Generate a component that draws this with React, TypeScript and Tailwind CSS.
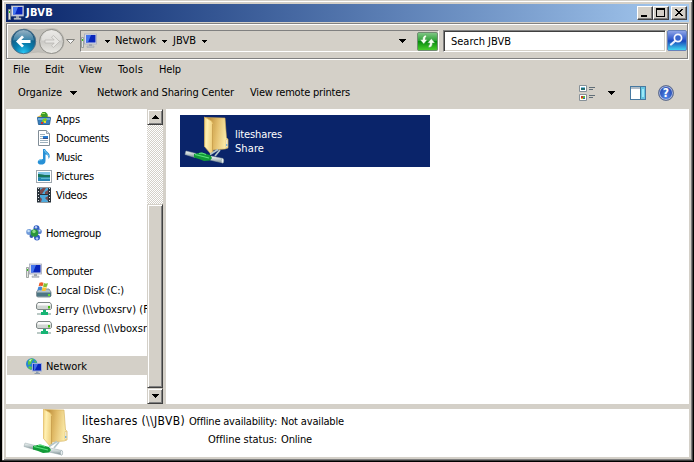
import React, { useLayoutEffect, useRef, useState } from "react";

/** A line of text whose tracking is adjusted to fill a given width. */
function Label({ text, width, className = "" }: { text: string; width: number; className?: string }) {
  const ref = useRef<HTMLSpanElement>(null);
  const [tracking, setTracking] = useState(0);
  useLayoutEffect(() => {
    if (ref.current) {
      const natural = ref.current.getBoundingClientRect().width;
      setTracking((width - natural) / text.length);
    }
  }, [text, width]);
  return (
    <span className="block shrink-0 whitespace-pre" style={{ width }}>
      <span ref={ref} className={`inline-block whitespace-pre ${className}`} style={{ letterSpacing: tracking }}>
        {text}
      </span>
    </span>
  );
}

function Caret({ className = "" }: { className?: string }) {
  return (
    <svg className={`shrink-0 ${className}`} width="7" height="4" viewBox="0 0 7 4" shapeRendering="crispEdges">
      <path d="M0 0h7v1H6v1H5v1H4v1H3V3H2V2H1V1H0z" fill="currentColor" />
    </svg>
  );
}

function SmallCaret({ className = "" }: { className?: string }) {
  return (
    <svg className={`shrink-0 ${className}`} width="5" height="3" viewBox="0 0 5 3" shapeRendering="crispEdges">
      <path d="M0 0h5v1H4v1H3v1H2V2H1V1H0z" fill="currentColor" />
    </svg>
  );
}

function ComputerIcon() {
  return (
    <svg className="shrink-0" width="16" height="16" viewBox="0 0 16 16">
      <path d="M.5 4.5h2v10h-2z" fill="#e4e6e4" stroke="#8c938f" strokeWidth=".8" />
      <path d="M1 6h1v2H1z" fill="#31c51d" />
      <rect x="3.5" y="1" width="12" height="10" fill="#d9dcea" stroke="#a5aabb" strokeWidth=".8" />
      <rect x="5" y="2" width="9.5" height="7.5" fill="#0825bb" />
      <path d="M5 2h5L7 9.5H5z" fill="#4475ee" />
      <path d="M8 11h3v2H8z" fill="#a3a8b0" />
      <path d="M6 13h7v1.4H6z" fill="#c7cbd2" stroke="#969ca6" strokeWidth=".5" />
    </svg>
  );
}

function NetDriveIcon() {
  return (
    <svg className="shrink-0" width="17" height="16" viewBox="0 0 17 16">
      <path d="M2 1.5h12l1.5 2v4l-1 1H2l-1.5-1v-4z" fill="#d0d5d2" stroke="#7e8786" />
      <path d="M2.3 2h11.5l1 2.500H1.3z" fill="#fafafa" />
      <path d="M12 5h2v2.5h-2z" fill="#42bd12" />
      <path d="M7 9h3v2h2v3H5v-3h2z" fill="#16b474" />
      <path d="M1 12h4v2H1zM12 12h3v2h-3z" fill="#bac9c5" />
    </svg>
  );
}

function AppsIcon() {
  return (
    <svg className="shrink-0" width="16" height="16" viewBox="0 0 16 16">
      <path d="M4 6 5 3l1.5-2h3l2 2 .5 3z" fill="#3d9b25" />
      <path d="M6 2h3v1H6z" fill="#a5df56" />
      <path d="M1 6 5 4l1 3zM11 5l4 1-2 1z" fill="#e0b644" />
      <path d="M1.5 6.5h13l-1 7h-11z" fill="#367fbd" stroke="#2c659b" />
      <path d="M2 7h12v2H2z" fill="#6aaad8" />
      <path d="m7 8 3-1 1 2-2 2H6z" fill="#7fcc27" />
      <path d="M5 11h2v2H5z" fill="#c9352c" />
      <path d="M8 10h2v2H8z" fill="#f2d235" />
    </svg>
  );
}

function DocumentsIcon() {
  return (
    <svg className="shrink-0" width="16" height="16" viewBox="0 0 16 16">
      <path d="M2.5.5h8l3 3v12h-11z" fill="#fff" stroke="#818d97" />
      <path d="M10.5.5v3h3" fill="#e0e7ed" stroke="#96a3ad" />
      <path d="M4 4.5h5M4 6.5h3M4 8.5h3M4 10.5h8M4 12.5h8" stroke="#9db1bd" />
      <rect x="7" y="6" width="5" height="3" fill="#257bd0" />
      <path d="M7 8.5h5" stroke="#39518c" />
    </svg>
  );
}

function MusicIcon() {
  return (
    <svg className="shrink-0" width="16" height="16" viewBox="0 0 16 16">
      <path d="M7 0h2c1 3 6 4 4.5 8.5l-1 1.5c.4-3-1-4.5-3-4.5V12c0 3-3 4-5.500 3.500s-3-3-1-4.500 3-1 4-.8z" fill="#2790d6" />
      <path d="M8.300 1c1 3 4 4 4.800 6M2.500 12c.5-1 2-1.600 3.500-1.300" fill="none" stroke="#83d2f5" />
    </svg>
  );
}

function PicturesIcon() {
  return (
    <svg className="shrink-0" width="16" height="16" viewBox="0 0 16 16">
      <rect x=".5" y="2.5" width="15" height="12" fill="#fff" stroke="#a0a8af" />
      <rect x="2" y="4" width="12" height="9" fill="#84c6e8" />
      <path d="M2 6c3-.5 5 1.500 12 1v2.500H2z" fill="#17765a" />
      <path d="M2 9.500h12V13H2z" fill="#2584b3" />
      <path d="M5 10.500h9" stroke="#55b9cd" />
    </svg>
  );
}

function VideosIcon() {
  return (
    <svg className="shrink-0" width="16" height="16" viewBox="0 0 16 16">
      <path d="M1 .5h14v15H1z" fill="#29323b" />
      <path d="M4 1h8v6H4zM4 8h8v7H4z" fill="#4da9dc" />
      <path d="m4 3 3-2h3L8 4 6 7H4zM9 5l3-2v4H9zM4 10l2 2-1 3H4zM12 9v5l-3-3z" fill="#7b4a4d" />
      <path d="M2.5 1v15M13.5 1v15" stroke="#e2e5e7" strokeDasharray="1 2" />
    </svg>
  );
}

function HomegroupIcon() {
  return (
    <svg className="shrink-0" width="16" height="16" viewBox="0 0 16 16">
      <circle cx="3.200" cy="7" r="3" fill="#6f9ad9" />
      <circle cx="10.500" cy="3.200" r="3" fill="#315ec1" />
      <circle cx="11" cy="12.500" r="3" fill="#315ec1" />
      <circle cx="13.200" cy="6.500" r="2.600" fill="#5c82ce" />
      <circle cx="5.500" cy="11" r="2" fill="#345aa8" />
      <circle cx="8.500" cy="8" r="3.800" fill="#29953a" />
      <circle cx="8" cy="6.500" r="1.700" fill="#8edc83" />
      <circle cx="2.600" cy="6" r="1.300" fill="#c3def6" />
      <circle cx="10" cy="2.300" r="1.200" fill="#b6cef7" />
      <circle cx="13.600" cy="5.700" r="1" fill="#c3def6" />
      <circle cx="11" cy="13.500" r="1.300" fill="#b6cef7" />
    </svg>
  );
}

function DiskIcon() {
  return (
    <svg className="shrink-0" width="17" height="16" viewBox="0 0 17 16">
      <path d="m2 8 2-1h9l2 3v4l-1 1H1.500l-1-1v-4z" fill="#b5c3cb" stroke="#718087" strokeWidth=".8" />
      <path d="M1 10.500h14v4H1z" fill="#4d7683" />
      <path d="M12 12h2v2h-2z" fill="#65dc2d" />
      <path d="M3.500.8q2-1.200 4 0L6.600 4.300q-2-1-4 0z" fill="#ed5c28" />
      <path d="M8 1q2 1 4 0l-1 3.500q-2 1-4 0z" fill="#84bf35" />
      <path d="M2.300 5q2-1 4 0l-1 3.500q-2-1-4 0z" fill="#4387d7" />
      <path d="M6.800 5q2 1 4 0l-1 3.500q-2 1-4 0z" fill="#f9c52e" />
    </svg>
  );
}

function NetworkIcon() {
  return (
    <svg className="shrink-0" width="17" height="16" viewBox="0 0 17 16">
      <circle cx="5.700" cy="6" r="5.700" fill="#2784d5" />
      <path d="M2 3Q5-.5 8 1L6 3 5 6 2 7zM9 2l2 3-3-1zM3 8l3 1-1 3-3-2z" fill="#5ac646" />
      <path d="m3 2 3-1-2 3z" fill="#d7f4c1" />
      <rect x="6.500" y="5.500" width="9" height="7.500" fill="#0825bb" stroke="#9aabd6" />
      <path d="M8 6h4l-3 6H8z" fill="#426de5" />
      <path d="M10 13.500h2.500v1.500H14v1H8.500v-1H10z" fill="#8b9bad" />
    </svg>
  );
}

function FolderShareIcon({ className = "" }: { className?: string }) {
  return (
    <svg className={`shrink-0 ${className}`} width="48" height="50" viewBox="0 0 48 50">
      <defs>
        <linearGradient id="folderFront" x1="0" x2="1" y2=".2">
          <stop stopColor="#f1d078" />
          <stop offset=".35" stopColor="#fff0b2" />
          <stop offset="1" stopColor="#efcf7c" />
        </linearGradient>
        <linearGradient id="folderBack" x1="0" x2="1" y2=".2">
          <stop offset=".2" stopColor="#c39642" />
          <stop offset=".55" stopColor="#e3be6c" />
          <stop offset="1" stopColor="#faeaa9" />
        </linearGradient>
        <linearGradient id="cable" x1="0" y1="0" x2="0" y2="1">
          <stop stopColor="#f8fbfa" />
          <stop offset=".5" stopColor="#bdcacb" />
          <stop offset="1" stopColor="#75868a" />
        </linearGradient>
      </defs>
      <path d="m22 2.500 19 .5 1.500 20 1.500 1v9l-3 1-13 1z" fill="url(#folderBack)" stroke="#d2ac58" strokeWidth=".6" />
      <path d="M42 24.500h1.700v8H42z" fill="#eff6fa" stroke="#e1bc66" strokeWidth=".6" />
      <path d="M42.300 29h1v2h-1z" fill="#4d9edb" />
      <path d="m20.500 2 7 4 1.500 3v28l-2.500 1.500-6-7z" fill="url(#folderFront)" stroke="#dfb95e" strokeWidth=".7" />
      <path d="M28.500 9v28" stroke="#b98c3d" strokeWidth=".6" />
      <path d="m26 39.500 8-5M31 41l5-6" stroke="#b4c6c9" strokeWidth="1.700" />
      <path d="m2 36 10 2.500-1 4L1 39.500z" fill="url(#cable)" stroke="#97a7ab" strokeWidth=".5" />
      <path d="m27 41 12 2.500V48l-13-3z" fill="url(#cable)" stroke="#97a7ab" strokeWidth=".5" />
      <ellipse cx="38.500" cy="45.800" rx="1.200" ry="2.300" fill="#e9eff1" stroke="#8b9ca1" strokeWidth=".5" />
      <path d="m10 39 7-1.500 3 1 6 1.500 2 3-2 2.500-6 .5-5-2-5-1.500z" fill="#129b38" />
      <path d="m11 39.500 14 3.500M15 38.500l3-.5 4 1.500" stroke="#5ce37d" strokeWidth="1.200" fill="none" />
    </svg>
  );
}

function CaptionButton({ children, label }: { children: React.ReactNode; label: string }) {
  return (
    <button aria-label={label} className="h-[14px] w-4 shrink-0 border border-t-white border-l-white border-r-[#404040] border-b-[#404040] bg-[#d4d0c8] shadow-[inset_-1px_-1px_0_#808080]">
      <svg width="14" height="12" viewBox="0 0 14 12" shapeRendering="crispEdges">{children}</svg>
    </button>
  );
}

function TitleBar() {
  return (
    <div className="flex h-[18px] shrink-0 items-center bg-linear-to-r from-[#0a246a] to-[#a6caf0] pr-0.5 pl-0.5 text-white">
      <ComputerIcon />
      <Label text="JBVB" width={27} className="ml-0.5 font-bold" />
      <div className="ml-auto flex">
        <CaptionButton label="Minimize"><path d="M3 8h6v2H3z" /></CaptionButton>
        <CaptionButton label="Maximize"><path fillRule="evenodd" d="M2 1h9v9H2zM3 3v6h7V3z" /></CaptionButton>
        <span className="w-0.5" />
        <CaptionButton label="Close"><path d="M3 2h2v1h1v1h2V3h1V2h2v1h-1v1H9v1H8v1h1v1h1v1h1v1H9V8H8V7H6v1H5v1H3V8h1V7h1V6h1V5H5V4H4V3H3z" /></CaptionButton>
      </div>
    </div>
  );
}

function NavButtons() {
  return (
    <svg className="shrink-0" width="67" height="30" viewBox="0 0 67 30">
      <defs>
        <radialGradient id="backFill" cx=".5" cy=".95" r=".8">
          <stop stopColor="#28c5f4" />
          <stop offset=".45" stopColor="#087eae" />
          <stop offset="1" stopColor="#155077" />
        </radialGradient>
        <linearGradient id="backShine" x1="0" y1="0" x2="0" y2="1">
          <stop stopColor="#dbe9f0" />
          <stop offset="1" stopColor="#4c8fb2" />
        </linearGradient>
        <linearGradient id="forwardFill" x1="0" y1="0" x2="0" y2="1">
          <stop stopColor="#e6e5e2" />
          <stop offset=".5" stopColor="#cbcac6" />
          <stop offset="1" stopColor="#ebeae5" />
        </linearGradient>
      </defs>
      <path d="M14 1.500q14 3 28 0c7 0 12 6 12 13s-5 12-12 12q-14-3-28 0z" fill="#c1bfb9" stroke="#b3b1ab" strokeWidth=".6" />
      <circle cx="13.500" cy="14.500" r="12.200" fill="url(#backFill)" stroke="#4f718a" />
      <path d="M3 13.500a10.500 10.500 0 0 1 21 0q-11-1.500-21 0z" fill="url(#backShine)" opacity=".65" />
      <path d="m6 14.500 6-6 2 1.700-2.700 2.800h9.200v3h-9.200l2.700 2.800-2 1.700z" fill="#fff" />
      <circle cx="41.500" cy="14.500" r="12" fill="url(#forwardFill)" stroke="#908f89" />
      <path d="M31.500 13.500a10 10 0 0 1 20 0z" fill="#f1f0ed" opacity=".45" />
      <path d="m49.500 14.500-6-6-2 1.700 2.700 2.800H35v3h9.200l-2.700 2.800 2 1.700z" fill="#e7e6e3" stroke="#b5b3af" strokeWidth=".7" />
      <path d="M56.500 12.500h8l-4 4z" fill="#f5f5f5" stroke="#85847f" />
    </svg>
  );
}

function AddressRow() {
  return (
    <div className="h-9 w-[682px] shrink-0 border border-[#808080] shadow-[inset_1px_1px_0_#fff,1px_1px_0_#fff]">
      <div className="flex h-full items-start pt-[6px] pl-[3px]">
        <div className="-mt-[3px] w-[70px] shrink-0"><NavButtons /></div>
        <div className="flex h-[22px] w-[359px] shrink-0 items-center border border-t-[#808080] border-l-[#808080] border-r-white border-b-white">
          <ComputerIcon />
          <SmallCaret className="ml-2" />
          <div className="ml-[5px]"><Label text="Network" width={41} /></div>
          <SmallCaret className="ml-[6px]" />
          <div className="ml-[6px]"><Label text="JBVB" width={23} /></div>
          <SmallCaret className="ml-[6px]" />
          <Caret className="ml-auto" />
          <svg className="ml-[11px] shrink-0" width="21" height="19" viewBox="0 0 21 19">
            <defs>
              <linearGradient id="refreshFill" x1="0" y1="0" x2="0" y2="1">
                <stop stopColor="#84c88a" />
                <stop offset=".45" stopColor="#2ca234" />
                <stop offset=".5" stopColor="#078c0d" />
                <stop offset="1" stopColor="#4cd12d" />
              </linearGradient>
            </defs>
            <rect x=".5" y=".5" width="20" height="18" rx="1.500" fill="url(#refreshFill)" stroke="#718c72" />
            <path d="M9.500 3q-4 0-4 4.500H3l3.700 4.500 3.800-4.500H8.300q0-2 1.200-3zM11.500 15.500q4 0 4-4.500H18l-3.700-4.500-3.800 4.500h2.300q0 2-1.300 3z" fill="#f5fff0" stroke="#3b9542" strokeWidth=".5" />
          </svg>
        </div>
        <div className="ml-1 flex h-[22px] w-[223px] shrink-0 items-center border border-t-[#808080] border-l-[#808080] border-r-white border-b-white bg-white pt-px pl-[7px] shadow-[inset_1px_1px_0_#404040,inset_-1px_-1px_0_#d4d0c8]">
          <Label text="Search JBVB" width={60} />
        </div>
        <svg className="ml-px shrink-0" width="20" height="21" viewBox="0 0 20 21">
          <defs>
            <linearGradient id="searchFill" x1="0" y1="0" x2="0" y2="1">
              <stop stopColor="#94a9e9" />
              <stop offset=".48" stopColor="#2853c9" />
              <stop offset=".52" stopColor="#1746ba" />
              <stop offset="1" stopColor="#43ddf3" />
            </linearGradient>
          </defs>
          <rect x=".5" y=".5" width="19" height="20" rx="1.500" fill="url(#searchFill)" stroke="#6681bb" />
          <path d="m4 14.500 4-3.500" stroke="#e8edff" strokeWidth="2.300" strokeLinecap="round" />
          <circle cx="11" cy="8" r="3.600" fill="#3966cc" stroke="#f5f7ff" strokeWidth="1.700" />
        </svg>
      </div>
    </div>
  );
}

function MenuBar() {
  return (
    <div className="flex h-[22px] shrink-0 items-center pb-px pl-[7px]">
      <Label text="File" width={17} />
      <span className="w-[15px]" /><Label text="Edit" width={19} />
      <span className="w-[15px]" /><Label text="View" width={23} />
      <span className="w-4" /><Label text="Tools" width={25} />
      <span className="w-4" /><Label text="Help" width={22} />
    </div>
  );
}

function CommandBar() {
  return (
    <div className="flex h-[28px] shrink-0 items-center pb-1 pl-3">
      <Label text="Organize" width={44} />
      <Caret className="ml-2" />
      <span className="w-5" />
      <Label text="Network and Sharing Center" width={137} />
      <span className="w-4" />
      <Label text="View remote printers" width={100} />
      <svg className="ml-[229px] shrink-0" width="16" height="16" viewBox="0 0 16 16">
        <path d="M.5.5h7v6h-7zM.5 9.500h7v6h-7z" fill="#fff" stroke="#879198" />
        <path d="M2 2h4v1H2z" fill="#79bfdd" /><path d="M2 3h4v2H2z" fill="#236d70" />
        <path d="M2 11h2v2H2z" fill="#c23c32" /><path d="M4 11h2v2H4z" fill="#5cb738" />
        <path d="M2 13h2v1H2z" fill="#e8b521" /><path d="M4 13h2v1H4z" fill="#2464ba" />
        <path d="M10 2.500h6M10 4.500h4M10 10.500h6M10 12.500h4" stroke="#606d77" />
      </svg>
      <Caret className="ml-[13px]" />
      <svg className="ml-[15px] shrink-0" width="16" height="14" viewBox="0 0 16 14" shapeRendering="crispEdges">
        <path d="M.5.5h15v13H.5z" fill="#fff" stroke="#4779a1" />
        <path d="M1 1h9v2H1z" fill="#b2bdc7" /><path d="M10 1h5v12h-5z" fill="#65c4e2" />
        <path d="M10 1v12" stroke="#367998" /><path d="M12 3h2v8h-2z" fill="#9ce8f7" />
      </svg>
      <div className="ml-3 flex h-4 w-4 shrink-0 items-center justify-center rounded-full border border-[#64718e] bg-radial-[at_50%_80%] from-[#5187ea] to-[#1837a2] text-[12px] font-bold text-white shadow-[inset_0_0_0_1px_#aab8dd]">?</div>
    </div>
  );
}

const rows: { text: string; width: number; icon?: React.ReactNode; child?: boolean; selected?: boolean }[] = [
  { text: "Apps", width: 24, icon: <AppsIcon />, child: true },
  { text: "Documents", width: 53, icon: <DocumentsIcon />, child: true },
  { text: "Music", width: 26, icon: <MusicIcon />, child: true },
  { text: "Pictures", width: 38, icon: <PicturesIcon />, child: true },
  { text: "Videos", width: 31, icon: <VideosIcon />, child: true },
  { text: "", width: 0 },
  { text: "Homegroup", width: 55, icon: <HomegroupIcon /> },
  { text: "", width: 0 },
  { text: "Computer", width: 47, icon: <ComputerIcon /> },
  { text: "Local Disk (C:)", width: 68, icon: <DiskIcon />, child: true },
  { text: "jerry (\\\\vboxsrv) (F", width: 93, icon: <NetDriveIcon />, child: true },
  { text: "sparessd (\\\\vboxsr", width: 91, icon: <NetDriveIcon />, child: true },
  { text: "", width: 0 },
  { text: "Network", width: 41, icon: <NetworkIcon />, selected: true },
];

function NavigationTree() {
  return (
    <nav className="w-[141px] shrink-0 overflow-hidden bg-white pl-px">
      {rows.map((row, i) => (
        <div key={i} className={`flex h-[19px] items-center overflow-hidden ${row.child ? "pl-[29px]" : "pl-[19px]"} ${row.selected ? "bg-[#d4d0c8]" : ""}`}>
          {row.icon && <div className="w-[20px] shrink-0">{row.icon}</div>}
          {row.text && <div className="pt-[2px]"><Label text={row.text} width={row.width} /></div>}
        </div>
      ))}
    </nav>
  );
}

function ScrollButton({ down = false }: { down?: boolean }) {
  return (
    <div className="flex h-4 shrink-0 items-center justify-center border border-t-[#d4d0c8] border-l-[#d4d0c8] border-r-[#404040] border-b-[#404040] bg-[#d4d0c8] shadow-[inset_1px_1px_0_#fff,inset_-1px_-1px_0_#808080]">
      <Caret className={down ? "" : "rotate-180"} />
    </div>
  );
}

function ScrollBar() {
  return (
    <div className="flex w-4 shrink-0 flex-col">
      <ScrollButton />
      <div className="h-[79px] shrink-0 bg-[repeating-conic-gradient(#d4d0c8_0_25%,#fff_0_50%)] bg-size-[2px_2px]" />
      <div className="flex-1 border border-t-[#d4d0c8] border-l-[#d4d0c8] border-r-[#404040] border-b-[#404040] bg-[#d4d0c8] shadow-[inset_1px_1px_0_#fff,inset_-1px_-1px_0_#808080]" />
      <ScrollButton down />
    </div>
  );
}

export default function App() {
  return (
    <div className="h-[462px] w-[694px] overflow-hidden border-r border-b border-l-2 border-black bg-[#d4d0c8] font-['DejaVu_Sans_Condensed','DejaVu_Sans',sans-serif] text-[11px] leading-[14px] font-stretch-condensed text-black">
      <div className="flex h-[461px] flex-col border-r border-b border-[#404040] pt-1 pl-1 shadow-[inset_1px_1px_0_#d4d0c8,inset_2px_2px_0_#fff,inset_-1px_-1px_0_#808080]">
        <div className="mr-[3px] flex h-[453px] shrink-0 flex-col">
          <TitleBar />
          <div className="flex shrink-0 pt-px"><AddressRow /></div>
          <MenuBar />
          <CommandBar />
          <div className="flex h-[295px] shrink-0">
            <NavigationTree />
            <ScrollBar />
            <div className="w-[3px] shrink-0" />
            <main className="flex-1 bg-white pt-1.5 pl-3.5">
              <div className="flex h-[52px] w-[250px] bg-[#0a246a] text-white">
                <FolderShareIcon className="ml-1" />
                <div className="mt-[13px] ml-[3px]">
                  <Label text="liteshares" width={47} />
                  <Label text="Share" width={29} />
                </div>
              </div>
            </main>
          </div>
          <footer className="mt-[5px] flex h-12 shrink-0 overflow-hidden bg-white">
            <FolderShareIcon className="-mt-0.5 ml-[17px]" />
            <div className="mt-[5px] ml-[11px] w-[107px]">
              <Label text="liteshares (\\JBVB)" width={103} className="text-[12px]" />
              <div className="mt-1"><Label text="Share" width={29} /></div>
            </div>
            <div className="mt-[6px] flex w-[88px] flex-col items-end gap-1">
              <Label text="Offline availability:" width={88} />
              <Label text="Offline status:" width={69} />
            </div>
            <div className="mt-[6px] ml-1 flex flex-col gap-1">
              <Label text="Not available" width={63} />
              <Label text="Online" width={31} />
            </div>
          </footer>
        </div>
      </div>
    </div>
  );
}
